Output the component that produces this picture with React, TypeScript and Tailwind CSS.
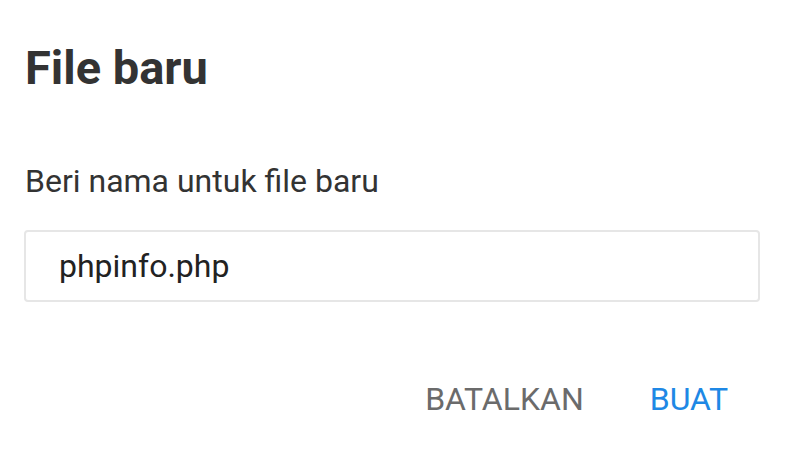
export default function App() {
  return (
    <div className="w-[786px] h-[470px] bg-white" style={{ fontFamily: "Roboto, sans-serif" }}>
      <div className="pl-[25px] pr-[26px] pt-[40px]">
        <h1 className="text-[47px] leading-[56px] font-bold text-[#333333]">File baru</h1>
        <p className="mt-[66px] text-[32px] leading-[38px] text-[#333333]">Beri nama untuk file baru</p>
        <div className="mt-[30px] h-[72px] w-[736px] -ml-px border-2 border-[#e6e6e6] rounded-[4px] flex items-center pl-[33px] text-[32px] text-[#222222]">
          phpinfo.php
        </div>
        <div className="mt-[78px] flex justify-end gap-[66px] pr-[32px] text-[32px] leading-[38px]">
          <span className="text-[#6b6b6b]">BATALKAN</span>
          <span className="text-[#1e88e5]">BUAT</span>
        </div>
      </div>
    </div>
  );
}
